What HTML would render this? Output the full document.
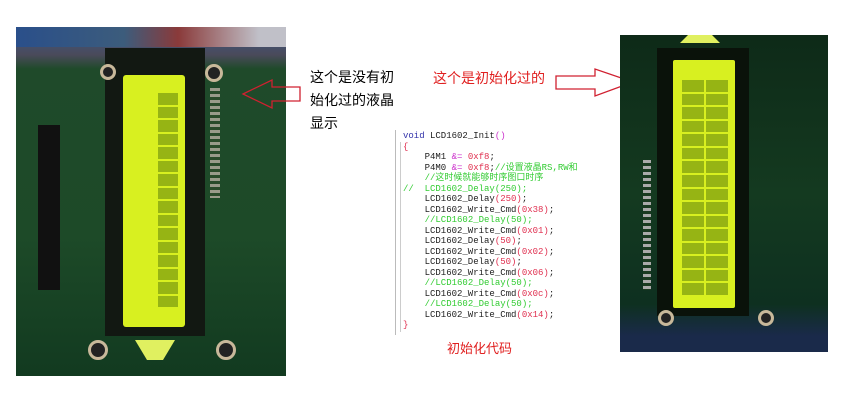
<!DOCTYPE html>
<html><head><meta charset="utf-8"><style>
body{margin:0;width:853px;height:400px;background:#fff;position:relative;overflow:hidden;font-family:"Liberation Sans","Noto Sans CJK SC",sans-serif}
.abs{position:absolute}
.code{position:absolute;font-family:"Liberation Mono","Noto Sans CJK SC",monospace;font-size:9px;line-height:10.5px;white-space:pre;color:#222}
.r{color:#e03050}.g{color:#3c3}.p{color:#c3c}.b{color:#33a}
.cells{position:absolute;display:grid;gap:2px}
.cells div{background:#7a9a10;opacity:.7}
</style></head><body>
<!-- left photo -->
<div class="abs" style="left:16px;top:27px;width:270px;height:349px;background:linear-gradient(180deg,#3a5a8a 0%,#4a4a5a 8%,#1f4a2a 12%,#1d4a28 60%,#123a20 100%)"></div>
<div class="abs" style="left:16px;top:27px;width:270px;height:20px;background:linear-gradient(90deg,#2a4f8a,#3c5c7c 40%,#8a3a3a 60%,#c0c0c8 90%)"></div>
<div class="abs" style="left:38px;top:125px;width:22px;height:165px;background:#111"></div>
<div class="abs" style="left:105px;top:48px;width:100px;height:288px;background:#121812"></div>
<div class="abs" style="left:123px;top:75px;width:62px;height:252px;background:#d8f020;border-radius:3px"></div>
<div class="cells" style="left:158px;top:93px;width:20px;height:214px;grid-template-rows:repeat(16,1fr)"><div></div><div></div><div></div><div></div><div></div><div></div><div></div><div></div><div></div><div></div><div></div><div></div><div></div><div></div><div></div><div></div></div>
<div class="abs" style="left:210px;top:88px;width:10px;height:110px;background:repeating-linear-gradient(180deg,#9a9a8a 0 3px,#2a4a2a 3px 6px)"></div>
<div class="abs" style="left:88px;top:340px;width:14px;height:14px;border-radius:50%;background:#222;border:3px solid #c8b89a"></div>
<div class="abs" style="left:216px;top:340px;width:14px;height:14px;border-radius:50%;background:#222;border:3px solid #c8b89a"></div>
<div class="abs" style="left:205px;top:64px;width:12px;height:12px;border-radius:50%;background:#222;border:3px solid #c8b89a"></div>
<div class="abs" style="left:100px;top:64px;width:10px;height:10px;border-radius:50%;background:#222;border:3px solid #c8b89a"></div>
<div class="abs" style="left:135px;top:340px;width:40px;height:20px;background:#e0f060;clip-path:polygon(0 0,100% 0,70% 100%,30% 100%)"></div>
<!-- left arrow -->
<svg class="abs" style="left:240px;top:78px" width="64" height="32"><polygon points="3,16 32,2 32,9 60,9 60,23 32,23 32,30" fill="none" stroke="#d02030" stroke-width="1.3"/></svg>
<div class="abs" style="left:310px;top:66px;font-size:14px;line-height:23px;color:#000">这个是没有初<br>始化过的液晶<br>显示</div>
<!-- right text + arrow -->
<div class="abs" style="left:433px;top:68px;font-size:14px;color:#e02020">这个是初始化过的</div>
<svg class="abs" style="left:553px;top:68px" width="82" height="30"><polygon points="3,8 42,8 42,1 80,14 42,28 42,21 3,21" fill="none" stroke="#d02030" stroke-width="1.3"/></svg>
<!-- right photo -->
<div class="abs" style="left:620px;top:35px;width:208px;height:317px;background:linear-gradient(180deg,#0e2a18,#143a20 50%,#0e3020 85%,#1a2a4a 95%)"></div>
<div class="abs" style="left:657px;top:48px;width:92px;height:268px;background:#0a120a"></div>
<div class="abs" style="left:673px;top:60px;width:62px;height:248px;background:#d8f020;border-radius:2px"></div>
<div class="cells" style="left:682px;top:80px;width:46px;height:215px;grid-template-rows:repeat(16,1fr);grid-template-columns:1fr 1fr"><div></div><div></div><div></div><div></div><div></div><div></div><div></div><div></div><div></div><div></div><div></div><div></div><div></div><div></div><div></div><div></div><div></div><div></div><div></div><div></div><div></div><div></div><div></div><div></div><div></div><div></div><div></div><div></div><div></div><div></div><div></div><div></div></div>
<div class="abs" style="left:643px;top:160px;width:8px;height:130px;background:repeating-linear-gradient(180deg,#aaa 0 3px,#1a3a20 3px 6px)"></div>
<div class="abs" style="left:658px;top:310px;width:10px;height:10px;border-radius:50%;background:#222;border:3px solid #c8b89a"></div>
<div class="abs" style="left:758px;top:310px;width:10px;height:10px;border-radius:50%;background:#222;border:3px solid #c8b89a"></div>
<div class="abs" style="left:680px;top:35px;width:40px;height:8px;background:#e0f060;clip-path:polygon(20% 0,80% 0,100% 100%,0 100%)"></div>
<!-- code -->
<div class="abs" style="left:395px;top:130px;width:1px;height:205px;background:#bbb"></div>
<div class="abs" style="left:400px;top:142px;width:1px;height:190px;background:#ccc"></div>
<div class="code" style="left:403px;top:131px"><span class="b">void</span> LCD1602_Init<span class="p">()</span>
<span class="r">{</span>
    P4M1 <span class="p">&amp;=</span> <span class="r">0xf8</span>;
    P4M0 <span class="p">&amp;=</span> <span class="r">0xf8</span>;<span class="g">//设置液晶RS,RW和</span>
    <span class="g">//这时候就能够时序图口时序</span>
<span class="g">//  LCD1602_Delay(250);</span>
    LCD1602_Delay<span class="r">(250)</span>;
    LCD1602_Write_Cmd<span class="r">(0x38)</span>;
    <span class="g">//LCD1602_Delay(50);</span>
    LCD1602_Write_Cmd<span class="r">(0x01)</span>;
    LCD1602_Delay<span class="r">(50)</span>;
    LCD1602_Write_Cmd<span class="r">(0x02)</span>;
    LCD1602_Delay<span class="r">(50)</span>;
    LCD1602_Write_Cmd<span class="r">(0x06)</span>;
    <span class="g">//LCD1602_Delay(50);</span>
    LCD1602_Write_Cmd<span class="r">(0x0c)</span>;
    <span class="g">//LCD1602_Delay(50);</span>
    LCD1602_Write_Cmd<span class="r">(0x14)</span>;
<span class="r">}</span></div>
<div class="abs" style="left:447px;top:338px;font-size:13px;color:#e02020">初始化代码</div>
</body></html>
